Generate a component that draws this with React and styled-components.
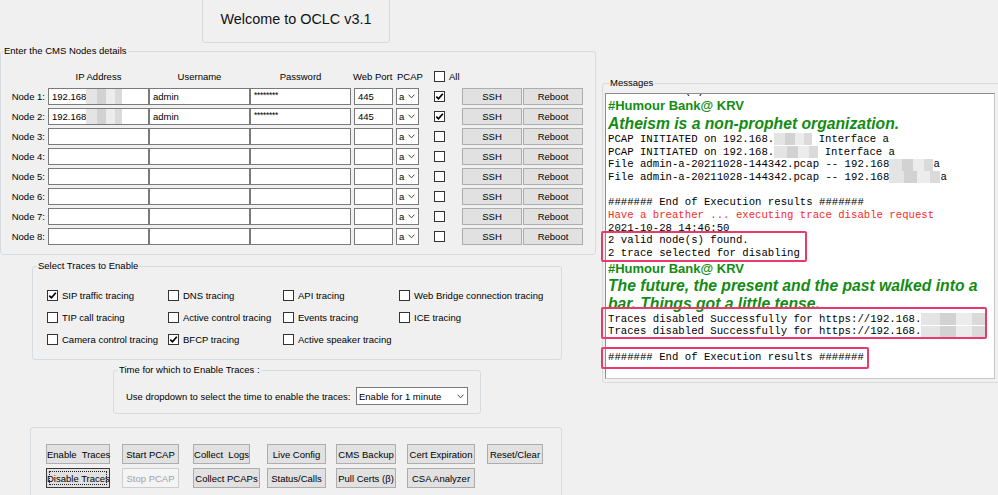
import styled, { createGlobalStyle, css } from 'styled-components';

const GlobalStyle = createGlobalStyle`
  * { box-sizing: border-box; }
  html, body {
    margin: 0;
    padding: 0;
    background: #f0f0f0;
  }
  body {
    font-family: 'Liberation Sans', Arial, sans-serif;
    font-size: 9.5px;
    color: #000;
  }
`;

const GREEN = '#128c12';

const Window = styled.div`
  display: flex;
  width: 998px;
  height: 495px;
  overflow: hidden;
  background: #f0f0f0;
`;

const LeftPane = styled.div`
  width: 597px;
  flex: none;
  display: flex;
  flex-direction: column;

  & > * {
    flex-shrink: 0;
  }
`;

const RightPane = styled.div`
  flex: 1;
  padding: 83px 0 0 5px;
`;

const TitleBox = styled.div`
  margin: -1px 0 0 202px;
  width: 188px;
  height: 44px;
  border: 1px solid #d9d9d9;
  border-radius: 0 0 3px 3px;
  display: flex;
  align-items: center;
  justify-content: center;
  padding-bottom: 5px;
  font-size: 14.4px;
  color: #111;
`;

const Group = styled.div`
  position: relative;
  border: 1px solid #d6dbe0;
  border-radius: 3px;
  margin-top: ${(p) => p.$top || 0}px;
  margin-left: ${(p) => p.$left || 0}px;
  width: ${(p) => p.$w}px;
  padding: ${(p) => p.$pad};
`;

const GroupLabel = styled.div`
  position: absolute;
  top: -7px;
  left: ${(p) => p.$x}px;
  padding: 0 1px;
  line-height: 12px;
  background: #f0f0f0;
  white-space: nowrap;
`;

const NodeGrid = styled.div`
  display: grid;
  grid-template-columns: 47px 101px 101px 103px 43px 37px 29px 61px 61px;
  grid-auto-rows: 20px;
  align-items: center;
`;

const HeadCell = styled.div`
  width: ${(p) => p.$w || 'auto'};
  text-align: ${(p) => p.$align || 'center'};
  padding-left: ${(p) => p.$pl || 0}px;
  white-space: nowrap;
`;

const NodeLabel = styled.div`
  justify-self: end;
  padding-right: 3px;
  white-space: nowrap;
`;

const Field = styled.div`
  width: ${(p) => p.$w}px;
  height: 17px;
  margin-left: ${(p) => p.$ml || 0}px;
  border: 1px solid #7a7a7a;
  background: #fff;
  display: flex;
  align-items: center;
  padding-left: 3px;
  white-space: pre;
  overflow: hidden;
`;

const Stars = styled.span`
  font-size: 8.5px;
  letter-spacing: -0.3px;
  margin-top: -3px;
`;

const Smudge = styled.span`
  display: inline-block;
  width: ${(p) => p.$w}px;
  height: ${(p) => p.$h || 15}px;
  background:
    linear-gradient(90deg, #e4e4e4 0 30%, #d2d2d2 30% 55%, #ececec 55% 80%, #dadada 80%);
  filter: blur(0.6px);
  vertical-align: middle;
`;

const Select = styled.div`
  width: ${(p) => p.$w}px;
  height: ${(p) => p.$h || 17}px;
  border: 1px solid #7a7a7a;
  background: #fff;
  display: flex;
  align-items: center;
  justify-content: space-between;
  padding: 0 3px 0 2px;
  white-space: nowrap;
`;

const Chevron = () => (
  <svg width="7" height="5" viewBox="0 0 7 5">
    <path d="M0.6 0.7 L3.5 3.8 L6.4 0.7" stroke="#444" strokeWidth="1" fill="none" />
  </svg>
);

const Box = styled.span`
  width: 11px;
  height: 11px;
  flex: none;
  border: 1px solid #333;
  background: #fff;
  display: inline-flex;
  align-items: center;
  justify-content: center;
`;

const CheckBox = ({ checked }) => (
  <Box>
    {checked && (
      <svg width="9" height="9" viewBox="0 0 9 9">
        <path d="M1.3 4.6 L3.5 6.8 L7.8 1.8" stroke="#000" strokeWidth="1.7" fill="none" />
      </svg>
    )}
  </Box>
);

const CheckItem = styled.label`
  display: flex;
  align-items: center;
  gap: 4px;
  white-space: nowrap;
  margin-left: ${(p) => p.$ml || 0}px;
`;

const Btn = styled.button`
  width: ${(p) => p.$w}px;
  height: ${(p) => p.$h || 17}px;
  margin: 0;
  padding: 0;
  font: inherit;
  color: #000;
  background: #e1e1e1;
  border: 1px solid #adadad;
  white-space: pre;
  position: relative;
  ${(p) =>
    p.disabled &&
    css`
      color: #a3a3a3;
      background: #f4f4f4;
      border-color: #cdcdcd;
    `}
  ${(p) =>
    p.$focused &&
    css`
      border-color: #3a3a3a;
      &::after {
        content: '';
        position: absolute;
        inset: 2px;
        border: 1px dotted #222;
      }
    `}
`;

const TraceGrid = styled.div`
  display: grid;
  grid-template-columns: 121px 115px 116px auto;
  grid-auto-rows: 22px;
  align-items: center;
`;

const TimeRow = styled.div`
  display: grid;
  grid-template-columns: 230px 112px;
  align-items: center;
`;

const ButtonGrid = styled.div`
  display: grid;
  grid-template-columns: 76px 71px 74px 69px 71px 80px auto;
  grid-auto-rows: 20px;
  row-gap: 4px;
`;

const MsgGroup = styled.div`
  position: relative;
  width: 404px;
  height: 300px;
  border: 1px solid #d6dbe0;
  border-radius: 3px;
  padding: 9px 0 0 2px;
`;

const TextArea = styled.div`
  width: 390px;
  height: 286px;
  border: 1px solid #8c8c8c;
  border-right-color: #c8c8c8;
  border-bottom-color: #c8c8c8;
  background: #fff;
  overflow: hidden;
  padding-left: 2px;
`;

const Scroll = styled.div`
  margin-top: -9.5px;
`;

const Mono = styled.div`
  font-family: 'Liberation Mono', 'Courier New', monospace;
  font-size: 10.67px;
  line-height: 12.67px;
  height: 12.67px;
  white-space: pre;
  color: ${(p) => p.$color || '#000'};
`;

const Humour = styled.div`
  font-weight: bold;
  font-size: 13px;
  line-height: 17px;
  color: ${GREEN};
`;

const Joke = styled.div`
  font-weight: bold;
  font-style: italic;
  font-size: 15.7px;
  line-height: ${(p) => p.$lh || 18}px;
  color: ${GREEN};
`;

const Mark = styled.div`
  position: absolute;
  left: -2px;
  top: ${(p) => p.$y}px;
  width: ${(p) => p.$w}px;
  height: ${(p) => p.$h}px;
  border: 2px solid #ea3a6c;
  border-radius: 2px;
`;

const nodes = [1, 2, 3, 4, 5, 6, 7, 8].map((n) => ({
  n,
  filled: n <= 2,
}));

const traces = [
  ['SIP traffic tracing', true],
  ['DNS tracing', false],
  ['API tracing', false],
  ['Web Bridge connection tracing', false],
  ['TIP call tracing', false],
  ['Active control tracing', false],
  ['Events tracing', false],
  ['ICE tracing', false],
  ['Camera control tracing', false],
  ['BFCP tracing', true],
  ['Active speaker tracing', false],
];

const actions = [
  { label: 'Enable  Traces', w: 64 },
  { label: 'Start PCAP', w: 57 },
  { label: 'Collect  Logs', w: 57 },
  { label: 'Live Config', w: 59 },
  { label: 'CMS Backup', w: 60 },
  { label: 'Cert Expiration', w: 68 },
  { label: 'Reset/Clear', w: 56 },
  { label: 'Disable Traces', w: 64, focused: true },
  { label: 'Stop PCAP', w: 57, disabled: true },
  { label: 'Collect PCAPs', w: 67 },
  { label: 'Status/Calls', w: 59 },
  { label: 'Pull Certs (β)', w: 60 },
  { label: 'CSA Analyzer', w: 68 },
];

const blank = (n) => ' '.repeat(n);

export default function App() {
  return (
    <>
      <GlobalStyle />
      <Window>
        <LeftPane>
          <TitleBox>Welcome to OCLC v3.1</TitleBox>

          {/* CMS nodes */}
          <Group $top={8} $w={596} $pad="14px 0 8px 0">
            <GroupLabel $x={2}>Enter the CMS Nodes details</GroupLabel>
            <NodeGrid>
              <div />
              <HeadCell $w="101px">IP Address</HeadCell>
              <HeadCell $w="101px">Username</HeadCell>
              <HeadCell $w="101px">Password</HeadCell>
              <HeadCell $align="left">Web Port</HeadCell>
              <HeadCell $align="left" $pl={1}>PCAP</HeadCell>
              <CheckItem $ml={1}>
                <CheckBox />
                All
              </CheckItem>
              <div />
              <div />

              {nodes.map((node) => [
                <NodeLabel key={'l' + node.n}>Node {node.n}:</NodeLabel>,
                <Field key={'ip' + node.n} $w={101}>
                  {node.filled && (
                    <>
                      192.168
                      <Smudge $w={36} />
                    </>
                  )}
                </Field>,
                <Field key={'u' + node.n} $w={101}>
                  {node.filled && 'admin'}
                </Field>,
                <Field key={'p' + node.n} $w={101}>
                  {node.filled && <Stars>********</Stars>}
                </Field>,
                <Field key={'w' + node.n} $w={39} $ml={1}>
                  {node.filled && '445'}
                </Field>,
                <Select key={'s' + node.n} $w={23}>
                  a
                  <Chevron />
                </Select>,
                <CheckItem key={'c' + node.n} $ml={1}>
                  <CheckBox checked={node.filled} />
                </CheckItem>,
                <Btn key={'ssh' + node.n} $w={60}>SSH</Btn>,
                <Btn key={'rb' + node.n} $w={60}>Reboot</Btn>,
              ])}
            </NodeGrid>
          </Group>

          {/* Trace selection */}
          <Group $top={11} $left={32} $w={530} $pad="17px 0 9px 14px">
            <GroupLabel $x={4}>Select Traces to Enable</GroupLabel>
            <TraceGrid>
              {traces.map(([label, on]) => (
                <CheckItem key={label}>
                  <CheckBox checked={on} />
                  {label}
                </CheckItem>
              ))}
            </TraceGrid>
          </Group>

          {/* Duration */}
          <Group $top={10} $left={113} $w={368} $pad="16px 0 8px 12px">
            <GroupLabel $x={4}>Time for which to Enable Traces :</GroupLabel>
            <TimeRow>
              <span>Use dropdown to select the time to enable the traces:</span>
              <Select $w={112} $h={18}>
                Enable for 1 minute
                <Chevron />
              </Select>
            </TimeRow>
          </Group>

          {/* Actions */}
          <Group $top={13} $left={30} $w={532} $pad="16px 0 12px 15px">
            <ButtonGrid>
              {actions.slice(0, 7).map((a) => (
                <Btn key={a.label} $w={a.w} $h={20}>
                  {a.label}
                </Btn>
              ))}
              {actions.slice(7).map((a) => (
                <Btn key={a.label} $w={a.w} $h={20} disabled={a.disabled} $focused={a.focused}>
                  {a.label}
                </Btn>
              ))}
            </ButtonGrid>
          </Group>
        </LeftPane>

        <RightPane>
          <MsgGroup>
            <GroupLabel $x={6}>Messages</GroupLabel>
            <TextArea>
              <Scroll>
                <Mono>2 valid node(s) found.</Mono>
                <Humour>#Humour Bank@ KRV</Humour>
                <Joke $lh={19}>Atheism is a non-prophet organization.</Joke>
                <Mono>
                  PCAP INITIATED on 192.168.<Smudge $w={38} $h={12} /> Interface a
                </Mono>
                <Mono>
                  PCAP INITIATED on 192.168.<Smudge $w={44} $h={12} /> Interface a
                </Mono>
                <Mono>
                  File admin-a-20211028-144342.pcap -- 192.168<Smudge $w={44} $h={12} />a
                </Mono>
                <Mono>
                  File admin-a-20211028-144342.pcap -- 192.168<Smudge $w={51} $h={12} />a
                </Mono>
                <Mono>{blank(1)}</Mono>
                <Mono>####### End of Execution results #######</Mono>
                <Mono $color="#f62a2a">Have a breather ... executing trace disable request</Mono>
                <Mono>2021-10-28 14:46:50</Mono>
                <Mono>2 valid node(s) found.</Mono>
                <Mono>2 trace selected for disabling</Mono>
                <Humour>#Humour Bank@ KRV</Humour>
                <Joke>The future, the present and the past walked into a bar. Things got a little tense.</Joke>
                <Mono>
                  Traces disabled Successfully for https://192.168.<Smudge $w={64} $h={12} />
                </Mono>
                <Mono>
                  Traces disabled Successfully for https://192.168.<Smudge $w={64} $h={12} />
                </Mono>
                <Mono>{blank(1)}</Mono>
                <Mono>####### End of Execution results #######</Mono>
              </Scroll>
            </TextArea>
            <Mark $y={147} $w={206} $h={31} />
            <Mark $y={223} $w={386} $h={32} />
            <Mark $y={263} $w={268} $h={22} />
          </MsgGroup>
        </RightPane>
      </Window>
    </>
  );
}
